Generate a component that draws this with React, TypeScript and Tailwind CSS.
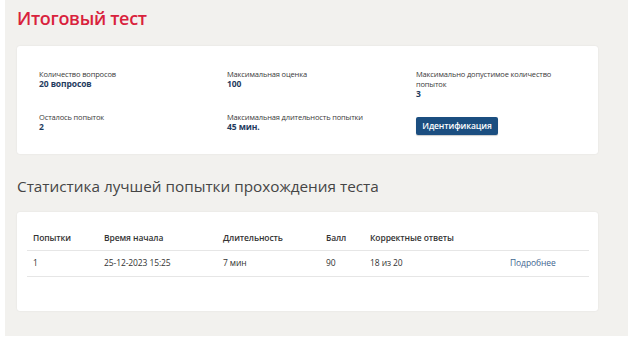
import React from "react";

const stats = [
  { label: "Количество вопросов", value: "20 вопросов" },
  { label: "Максимальная оценка", value: "100" },
  { label: "Максимально допустимое количество попыток", value: "3" },
  { label: "Осталось попыток", value: "2" },
  { label: "Максимальная длительность попытки", value: "45 мин." },
];

const columns = ["Попытки", "Время начала", "Длительность", "Балл", "Корректные ответы", ""];
// border-box widths, including the 6px left padding
const widths = ["w-[71px]", "w-[119px]", "w-[103px]", "w-[44px]", "w-[140px]", ""];

export default function App() {
  return (
    <div className="w-[639px] h-[344px] bg-white font-['Open_Sans',sans-serif] overflow-hidden">
      <div className="ml-[5px] w-[623px] h-[336px] bg-[#f2f1ee] px-[12px] pt-[6px]">
        {/* Title */}
        <h1 className="text-[18px] leading-[24px] font-semibold text-[#d9223c] tracking-[-0.3px]">
          Итоговый тест
        </h1>

        {/* Test info card */}
        <div className="mt-[16px] w-[581px] h-[108px] bg-white rounded-[3px] shadow-[0_0_2px_rgba(0,0,0,0.08)] pl-[22px] pt-[23px]">
          <div className="grid grid-cols-[188px_189px_160px] grid-rows-[43px_auto]">
            {stats.slice(0, 3).map((s) => (
              <div key={s.label}>
                <div className="text-[7.5px] leading-[10px] tracking-[-0.15px] text-[#3a3a3a] w-[140px]">{s.label}</div>
                <div className="text-[8.5px] leading-[10px] font-bold tracking-[-0.1px] text-[#1f3b5e]">{s.value}</div>
              </div>
            ))}
            {stats.slice(3).map((s) => (
              <div key={s.label}>
                <div className="text-[7.5px] leading-[10px] tracking-[-0.15px] text-[#3a3a3a]">{s.label}</div>
                <div className="text-[8.5px] leading-[10px] font-bold tracking-[-0.1px] text-[#1f3b5e]">{s.value}</div>
              </div>
            ))}
            <div className="-mt-[1px]">
              <button className="w-[82px] h-[18px] rounded-[2px] bg-[#1b4e80] text-white text-[8.5px] font-semibold tracking-[-0.1px] shadow-[0_1px_1px_rgba(0,0,0,0.2)]">
                Идентификация
              </button>
            </div>
          </div>
        </div>

        {/* Stats heading */}
        <h2 className="mt-[22px] text-[15.3px] leading-[20px] text-[#454545]">
          Статистика лучшей попытки прохождения теста
        </h2>

        {/* Results card */}
        <div className="mt-[16px] w-[581px] h-[99px] bg-white rounded-[3px] shadow-[0_0_2px_rgba(0,0,0,0.08)] pl-[10px] pr-[9px] pt-[16px]">
          <table className="w-full table-fixed border-collapse text-[8.5px] tracking-[-0.1px] text-[#333]">
            <thead>
              <tr className="h-[22px] border-b border-[#e6e6e6]">
                {columns.map((c, i) => (
                  <th key={i} className={`text-left font-semibold pl-[6px] ${widths[i]}`}>
                    {c}
                  </th>
                ))}
              </tr>
            </thead>
            <tbody>
              <tr className="h-[26px] border-b border-[#e6e6e6]">
                <td className="pl-[6px]">1</td>
                <td className="pl-[6px]">25-12-2023 15:25</td>
                <td className="pl-[6px]">7 мин</td>
                <td className="pl-[6px]">90</td>
                <td className="pl-[6px]">18 из 20</td>
                <td className="pl-[6px]">
                  <a href="#" className="text-[#3f6791]">Подробнее</a>
                </td>
              </tr>
            </tbody>
          </table>
        </div>
      </div>
    </div>
  );
}
